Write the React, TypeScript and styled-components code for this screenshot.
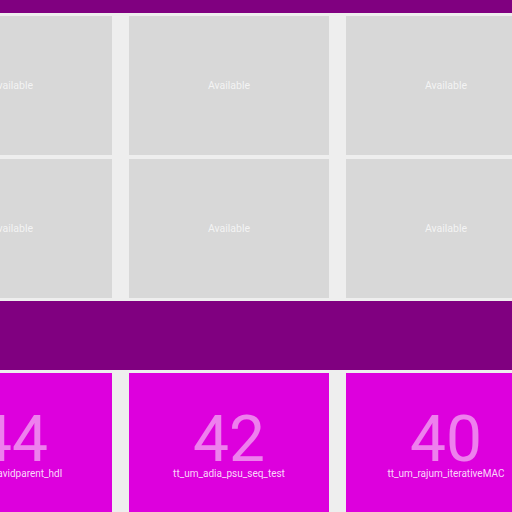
import React from "react";
import styled, { createGlobalStyle } from "styled-components";

const Global = createGlobalStyle`
  html, body { margin: 0; padding: 0; background: #eeeeee; overflow: hidden; }
  body { font-family: Roboto, "Liberation Sans", sans-serif; }
`;

const Page = styled.div`
  width: 512px;
  height: 512px;
  overflow: hidden;
  display: flex;
  flex-direction: column;
`;

const TopBar = styled.div`
  height: 13px;
  background: #800080;
  margin-bottom: 3px;
  flex: none;
`;

const Grid = styled.div`
  display: grid;
  grid-template-columns: repeat(3, 200px);
  column-gap: 17px;
  row-gap: 4px;
  margin-left: -88px;
  flex: none;
`;

const SlotCell = styled.div`
  height: 139px;
  background: #d8d8d8;
  display: flex;
  align-items: center;
  justify-content: center;
  color: rgba(255, 255, 255, 0.72);
  font-size: 10.5px;
`;

const Band = styled.div`
  height: 69px;
  background: #800080;
  margin: 3px 0;
  flex: none;
`;

const TileCell = styled.div`
  height: 139px;
  background: #dd00dd;
  display: flex;
  flex-direction: column;
  align-items: center;
  padding-top: 38px;
  box-sizing: border-box;
  white-space: nowrap;
`;

const Num = styled.div`
  font-size: 64px;
  line-height: 57px;
  color: rgba(255, 255, 255, 0.5);
`;

const Label = styled.div`
  font-size: 10px;
  line-height: 12px;
  color: rgba(255, 255, 255, 0.85);
`;

const tiles = [
  { n: "44", label: "tt_um_davidparent_hdl" },
  { n: "42", label: "tt_um_adia_psu_seq_test" },
  { n: "40", label: "tt_um_rajum_iterativeMAC" },
];

export default function App() {
  return (
    <Page>
      <Global />
      <TopBar />
      <Grid>
        {Array.from({ length: 6 }).map((_, i) => (
          <SlotCell key={i}>Available</SlotCell>
        ))}
      </Grid>
      <Band />
      <Grid>
        {tiles.map((t) => (
          <TileCell key={t.n}>
            <Num>{t.n}</Num>
            <Label>{t.label}</Label>
          </TileCell>
        ))}
      </Grid>
    </Page>
  );
}
